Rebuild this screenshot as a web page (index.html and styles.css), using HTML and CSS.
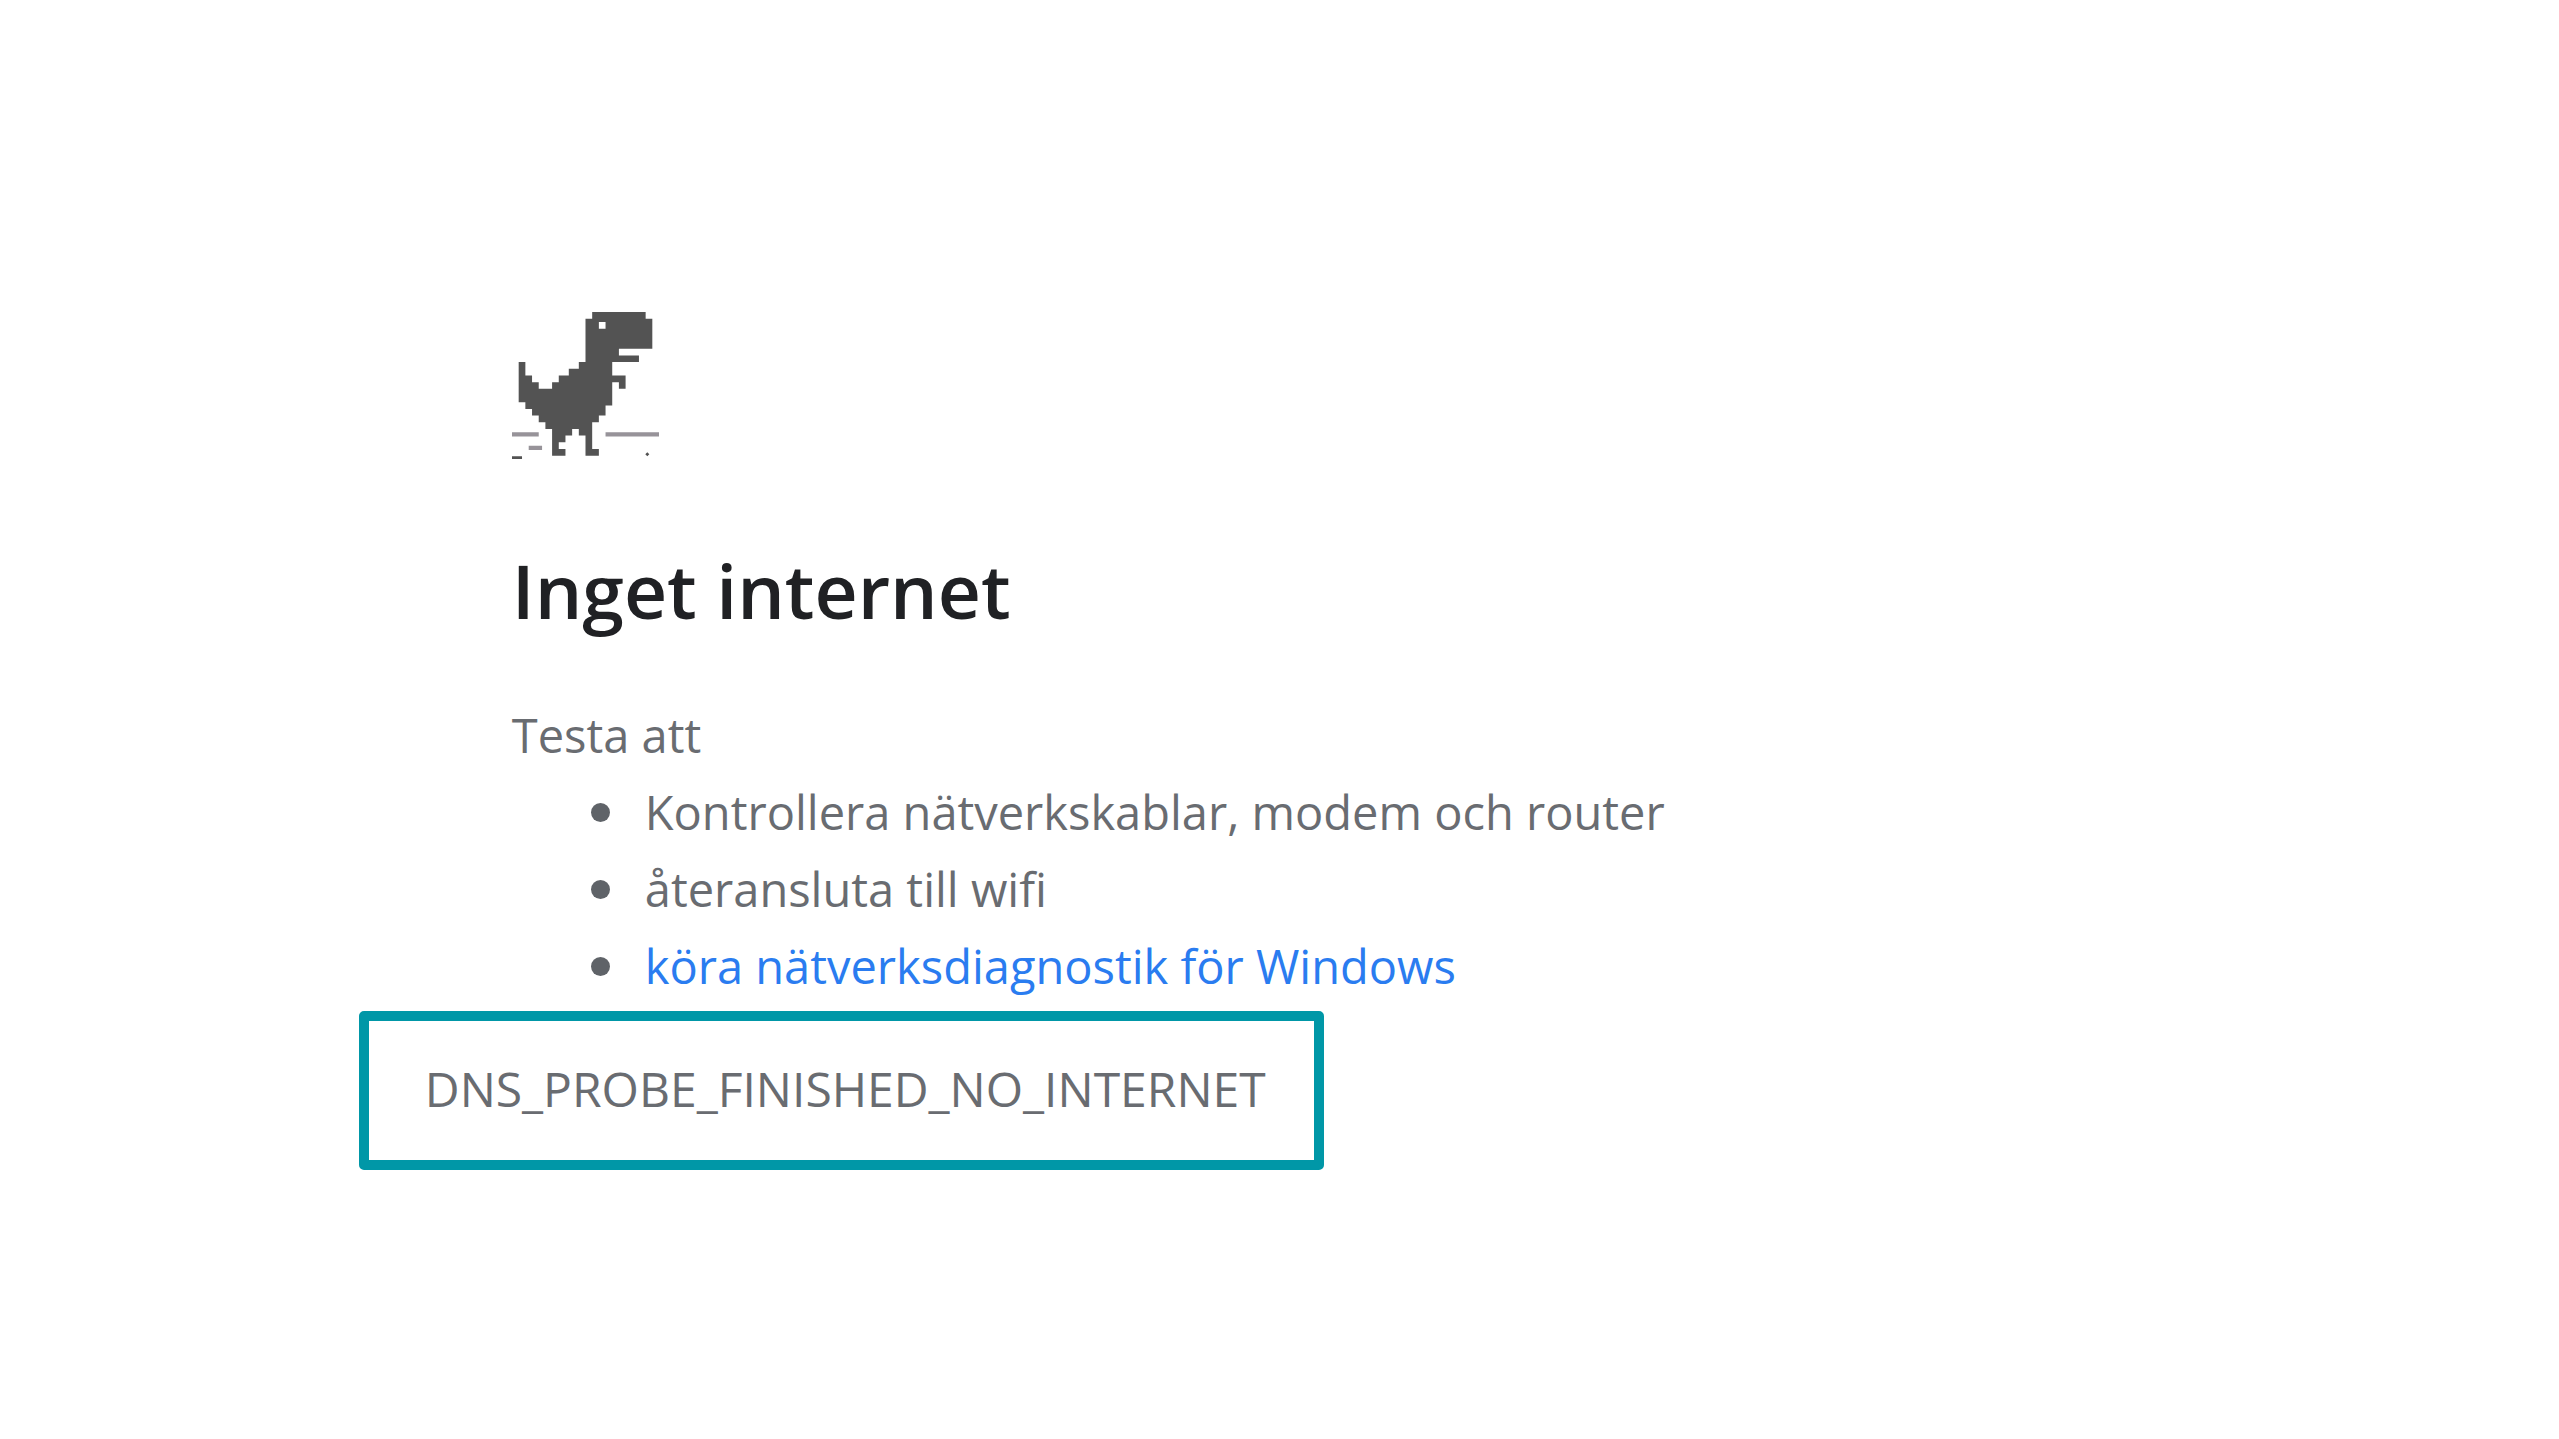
FILE: index.html
```html
<!DOCTYPE html>
<html lang="sv">
<head>
    <meta charset="UTF-8">
    <meta name="viewport" content="width=device-width, initial-scale=1.0">
    <title>Inget internet</title>
    <link rel="stylesheet" href="styles.css">
</head>
<body>
    <main class="error-page">
        <svg class="dino" viewBox="0 0 44 44" role="img" aria-label="Dinosaurie">
            <path class="dino-body" fill-rule="evenodd" d="M24 0H40V2H42V11H32V13H38V15H30V19H34V23H32V21H30V28H28V31H26V33H24V41H26V43H22V37H20V35H18V37H16V39H14V41H16V43H12V35H10V33H8V31H6V29H4V27H2V15H4V19H6V21H8V23H12V21H14V19H17V17H20V15H22V2H24ZM26 3V5H28V3Z"/>
            <path class="dino-ground" d="M0 36H8V37.3H0ZM28 36H44V37.3H28ZM5 40H9V41.3H5Z"/>
            <path class="dino-body" d="M0 43.2H3V44H0ZM40.5 42L41.1 42.6L40.5 43.2L39.9 42.6Z"/>
        </svg>

        <h1>Inget internet</h1>

        <div class="suggestions">
            <p>Testa att</p>
            <ul>
                <li>Kontrollera nätverkskablar, modem och router</li>
                <li>återansluta till wifi</li>
                <li><a href="#">köra nätverksdiagnostik för Windows</a></li>
            </ul>
        </div>

        <div class="error-code">DNS_PROBE_FINISHED_NO_INTERNET</div>
    </main>
</body>
</html>
```
FILE: styles.css
```css
:root {
    --heading-color: #202124; --text-color: #696c71;
    --bullet-color: #5f6368; --link-color: #2a7cf0;
    --frame-color: #0097a7;
    --dino-color: #535353; --ground-color: #979399;
}
body {
    font-family: "Open Sans", "Segoe UI", sans-serif;
    margin: 0; background-color: #fff; color: var(--text-color);
}
.error-page {
    padding: 312px 20% 80px;
}
.dino { display: block; width: 147px; height: 147px; }
.dino-body { fill: var(--dino-color); }
.dino-ground { fill: var(--ground-color); }
h1 {
    margin: 81px 0 0;
    font-size: 75px; line-height: 100px; font-weight: 600;
    color: var(--heading-color);
}
.suggestions { margin-top: 57px; font-size: 47px; line-height: 77px; }
.suggestions p { margin: 0; }
.suggestions ul { margin: 0; padding: 0 0 0 79px; list-style: none; }
.suggestions li { display: flex; align-items: center; gap: 35px; }
.suggestions li::before {
    content: ""; flex: none;
    width: 19px; height: 19px;
    border-radius: 50%; background-color: var(--bullet-color);
}
.suggestions a { color: var(--link-color); text-decoration: none; }
.error-code {
    width: fit-content; margin: 6px 0 0 -153px; padding: 30px 48px 33px 56px;
    border: 10px solid var(--frame-color); border-radius: 5px;
    font-size: 48px; line-height: 76px;
}
```
